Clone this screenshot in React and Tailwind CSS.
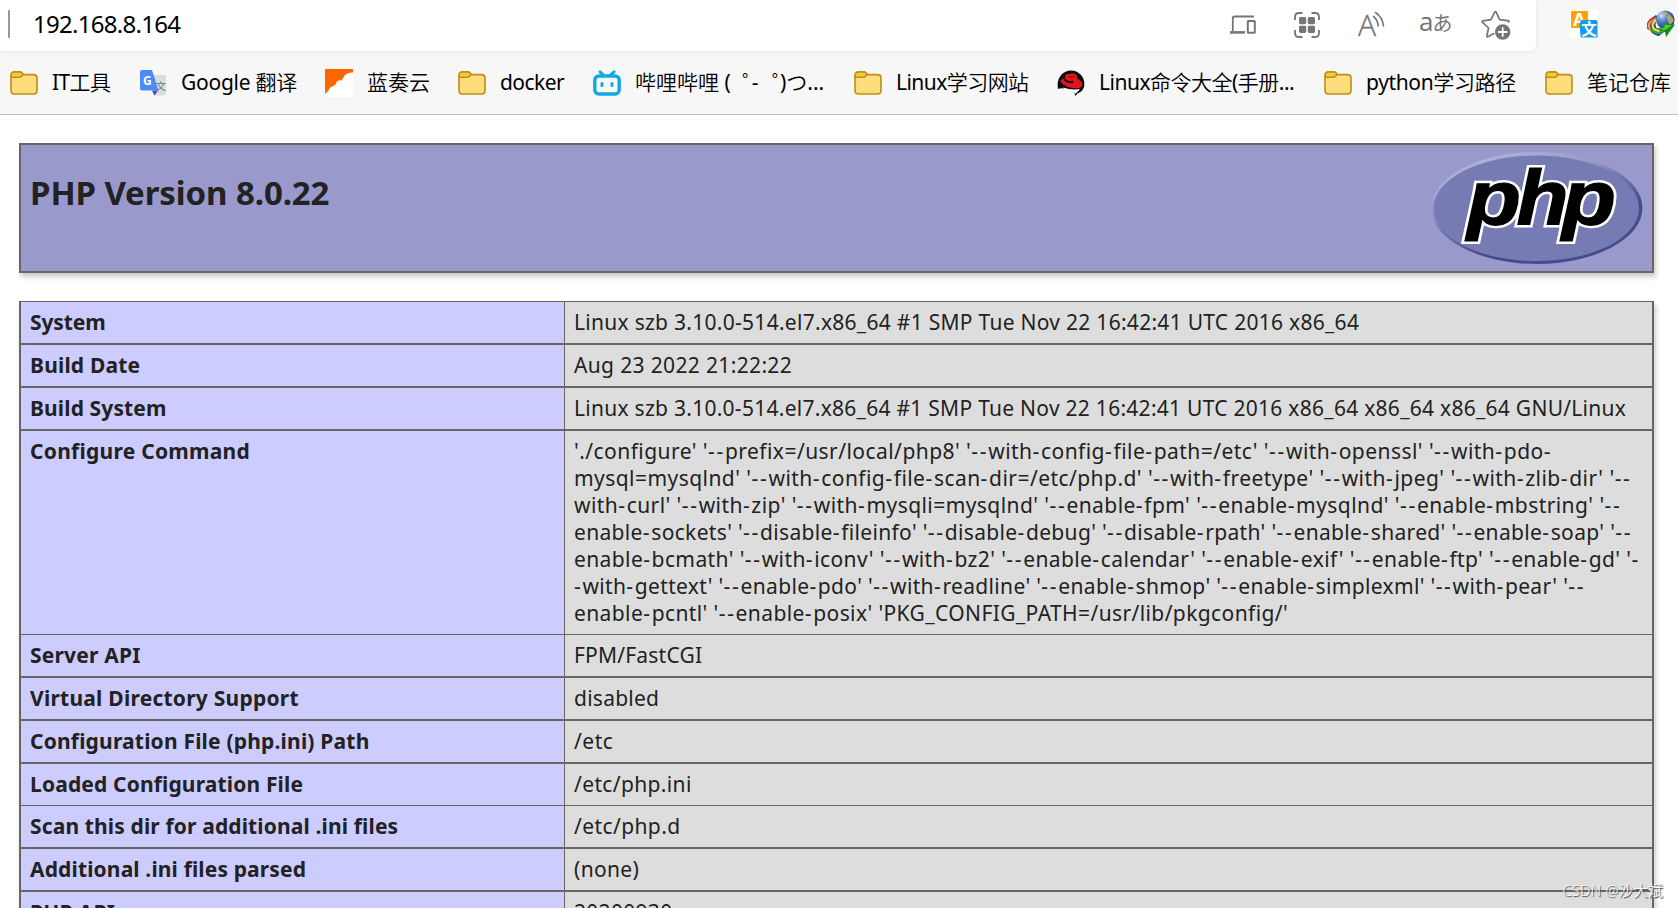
import React from 'react';

const FolderIcon = () => (
  <svg width="28" height="24" viewBox="0 0 28 24" className="shrink-0">
    <path d="M1 5 Q1 1 4.5 1 H10 Q11.2 1 12 2 L13.2 3.6 H23.5 Q27 3.6 27 7 V19.5 Q27 23 23.5 23 H4.5 Q1 23 1 19.5 Z" fill="#ffdc7d" stroke="#bd8f12" strokeWidth="1.6" />
    <path d="M1 4.8 Q1 1 4.5 1 H10 Q11.2 1 12 2 L12.8 3.2 Q12.6 4.2 11.6 5.2 Q10.8 6.2 9.4 6.2 H1 Z" fill="#f6c83f" stroke="#bd8f12" strokeWidth="1.4" />
  </svg>
);

const GoogleTranslateIcon = () => (
  <svg width="28" height="28" viewBox="0 0 28 28" className="shrink-0">
    <path d="M11 6 H25 Q27 6 27 8 V24.5 Q27 26.5 25 26.5 H15 Z" fill="#dcdcdc" />
    <path d="M13 21.5 H19 L15.5 26.5 Z" fill="#3b50b8" />
    <text x="16.5" y="20.5" fontSize="10.5" fill="#607d8b" fontFamily="Noto Sans CJK SC">文</text>
    <path d="M3 1 H13 L19.5 21.5 H3 Q1 21.5 1 19.5 V3 Q1 1 3 1 Z" fill="#4c8bf5" />
    <text x="4" y="15.5" fontSize="12" fontWeight="700" fill="#fff" fontFamily="Noto Sans">G</text>
  </svg>
);

const LanzouIcon = () => (
  <svg width="28" height="28" viewBox="0 0 28 28" className="shrink-0">
    <rect width="28" height="28" fill="#fff" />
    <path d="M0 0 H28 V3.5 C24 3.5 20.5 5 19 7.5 C17.5 9 17.5 11 16.5 11.5 C14.5 10.5 11.5 11.5 11 14.5 C10 17.5 6.5 16.5 4.5 19.5 C3 21.5 3 23 1 24 L0 25 Z" fill="#ff6600" />
  </svg>
);

const BilibiliIcon = () => (
  <svg width="28" height="26" viewBox="0 0 28 26" className="shrink-0" fill="none" stroke="#10a9e4" strokeLinecap="round">
    <rect x="1.8" y="6" width="24.4" height="18" rx="4" strokeWidth="3.4" />
    <path d="M7 1.8 L10.5 5 M21 1.8 L17.5 5" strokeWidth="3" />
    <path d="M9 13.4 V15.6 M19 13.4 V15.6" strokeWidth="3" />
  </svg>
);

const RedHatIcon = () => (
  <svg width="28" height="28" viewBox="0 0 28 28" className="shrink-0">
    <path d="M1 20 C-1 10 5 1.5 14 1.5 C23 1.5 29 10 27 18 C26 21.5 23.5 23.5 20.5 24.5 L18.5 27 L17.5 24.5 C16 22 13 22.5 11.5 21 C8 19.5 4 18.5 1 20 Z" fill="#0b0b0b" />
    <path d="M6 18.5 C12 20.5 18 21 23 20 L20 23.5 L18 25 C17.5 23 14 23.5 12 24 C9 23.5 7 21 6 18.5 Z" fill="#f7f7f7" />
    <path d="M8.5 6 C10 4 12.5 5.5 14 4.5 C17.5 3.5 20 5 20.5 9.5 C24.5 12 27 15 24.5 18 C19 21.5 5.5 17.5 3.5 12.5 C3.2 10.5 5 9.5 7.5 10.2 Z" fill="#e0141c" />
    <path d="M7.5 10.2 C9 12.8 13.5 13.8 16 12.6" fill="none" stroke="#150505" strokeWidth="2" />
    <path d="M11 7.5 L14 8.5 L18 7.5" fill="none" stroke="#8a0a10" strokeWidth="0.9" />
  </svg>
);

const bookmarks = [
  { icon: <FolderIcon />, label: 'IT工具', css: 'w-[129px] tracking-[-0.6px]' },
  { icon: <GoogleTranslateIcon />, label: 'Google 翻译', css: 'w-[186px] tracking-[-0.25px]' },
  { icon: <LanzouIcon />, label: '蓝奏云', css: 'w-[133px]' },
  { icon: <FolderIcon />, label: 'docker', css: 'w-[135px] tracking-[-0.55px]' },
  {
    icon: <BilibiliIcon />,
    label: (
      <>哔哩哔哩 ( <span className="ml-[6px] mr-[-11.5px]">゜</span>- <span className="ml-[8px] mr-[-13px]">゜</span>)つ...</>
    ),
    css: 'w-[261px]',
  },
  { icon: <FolderIcon />, label: 'Linux学习网站', css: 'w-[203px] tracking-[-0.55px]' },
  { icon: <RedHatIcon />, label: 'Linux命令大全(手册...', css: 'w-[267px] tracking-[-0.5px]' },
  { icon: <FolderIcon />, label: 'python学习路径', css: 'w-[221px] tracking-[-0.35px]' },
  { icon: <FolderIcon />, label: '笔记仓库', css: 'w-[133px]' },
];

const rows = [
  { name: 'System', nameCss: 'tracking-[-0.1px]', lines: [['Linux szb 3.10.0-514.el7.x86_64 #1 SMP Tue Nov 22 16:42:41 UTC 2016 x86_64', 'tracking-[0.28px]']] },
  { name: 'Build Date', nameCss: 'tracking-[0.18px]', lines: [['Aug 23 2022 21:22:22', 'tracking-[0.35px]']] },
  { name: 'Build System', nameCss: 'tracking-[0.12px]', lines: [['Linux szb 3.10.0-514.el7.x86_64 #1 SMP Tue Nov 22 16:42:41 UTC 2016 x86_64 x86_64 x86_64 GNU/Linux', 'tracking-[0.27px]']] },
  {
    name: 'Configure Command',
    nameCss: 'tracking-[0.26px]',
    thin: true,
    lines: [
      ["'./configure' '--prefix=/usr/local/php8' '--with-config-file-path=/etc' '--with-openssl' '--with-pdo-", 'tracking-[0.45px]'],
      ["mysql=mysqlnd' '--with-config-file-scan-dir=/etc/php.d' '--with-freetype' '--with-jpeg' '--with-zlib-dir' '--", 'tracking-[0.45px]'],
      ["with-curl' '--with-zip' '--with-mysqli=mysqlnd' '--enable-fpm' '--enable-mysqlnd' '--enable-mbstring' '--", 'tracking-[0.43px]'],
      ["enable-sockets' '--disable-fileinfo' '--disable-debug' '--disable-rpath' '--enable-shared' '--enable-soap' '--", 'tracking-[0.336px]'],
      ["enable-bcmath' '--with-iconv' '--with-bz2' '--enable-calendar' '--enable-exif' '--enable-ftp' '--enable-gd' '-", 'tracking-[0.39px]'],
      ["-with-gettext' '--enable-pdo' '--with-readline' '--enable-shmop' '--enable-simplexml' '--with-pear' '--", 'tracking-[0.343px]'],
      ["enable-pcntl' '--enable-posix' 'PKG_CONFIG_PATH=/usr/lib/pkgconfig/'", 'tracking-[0.395px]'],
    ],
  },
  { name: 'Server API', nameCss: 'tracking-[0.2px]', lines: [['FPM/FastCGI', 'tracking-[0.2px]']] },
  { name: 'Virtual Directory Support', nameCss: 'tracking-[0.24px]', lines: [['disabled', 'tracking-[0.25px]']] },
  { name: 'Configuration File (php.ini) Path', nameCss: 'tracking-[0.19px]', lines: [['/etc', 'tracking-[0.5px]']] },
  { name: 'Loaded Configuration File', nameCss: 'tracking-[0.15px]', thin: true, lines: [['/etc/php.ini', 'tracking-[0.36px]']] },
  { name: 'Scan this dir for additional .ini files', nameCss: 'tracking-[0.14px]', lines: [['/etc/php.d', 'tracking-[0.4px]']] },
  { name: 'Additional .ini files parsed', nameCss: 'tracking-[0.14px]', lines: [['(none)', 'tracking-[0.35px]']] },
  { name: 'PHP API', nameCss: 'tracking-[0.25px]', lines: [['20200930', 'tracking-[0.3px]']] },
];

// the dashes of the configure flags are set wider than the letters
function Flags({ text }) {
  return text.split(/(-+)/).map((part, i) => (
    part.startsWith('-') ? <span key={i} className="tracking-[1.7px]">{part}</span> : part
  ));
}

function AddressIcons() {
  return (
    <div className="flex items-center h-[49px] pr-[25px] text-[#757575]">
      {/* devices */}
      <svg width="28" height="20" viewBox="0 0 28 20" className="mr-[37px]" fill="none" stroke="currentColor" strokeWidth="1.8">
        <path d="M25 1.5 H5.5 Q3.8 1.5 3.8 3.2 V16" />
        <path d="M1 17.4 H16" strokeWidth="2.6" />
        <rect x="18.8" y="6" width="7" height="11.8" rx="0.6" strokeWidth="2" />
      </svg>
      {/* apps */}
      <svg width="26" height="26" viewBox="0 0 26 26" className="mr-[38px]" fill="none" stroke="currentColor" strokeWidth="1.8">
        <path d="M1 8 V5 Q1 1 5 1 H8.5 M17.5 1 H21 Q25 1 25 5 V8 M25 18 V21 Q25 25 21 25 H17.5 M8.5 25 H5 Q1 25 1 21 V18" />
        <g fill="currentColor" stroke="none">
          <rect x="5" y="5" width="7.2" height="7.2" rx="1.4" />
          <rect x="13.8" y="5" width="7.2" height="7.2" rx="1.4" />
          <rect x="5" y="13.8" width="7.2" height="7.2" rx="1.4" />
          <rect x="13.8" y="13.8" width="7.2" height="7.2" rx="1.4" />
        </g>
      </svg>
      {/* read aloud */}
      <svg width="28" height="28" viewBox="0 0 28 28" className="mr-[33px]" fill="none" stroke="currentColor" strokeWidth="1.6" strokeLinecap="round">
        <text x="0" y="24.5" fontSize="29" textLength="18" lengthAdjust="spacingAndGlyphs" fill="currentColor" stroke="currentColor" strokeWidth="0.4" fontFamily="Open Sans" fontWeight="300">A</text>
        <path d="M15.5 5.5 Q19.5 8.5 20.3 15" />
        <path d="M17.5 1.5 Q24.5 6 25.5 15" />
      </svg>
      <span className="w-8 mr-[30px] pb-[7px] whitespace-nowrap text-[26px] leading-none tracking-[-1px] font-['Open_Sans',_'Noto_Sans_CJK_JP',sans-serif]">
        a<span className="text-[20px]">あ</span>
      </span>
      {/* favourite */}
      <svg width="30" height="30" viewBox="0 0 30 30" fill="none" stroke="currentColor" strokeWidth="1.7" strokeLinejoin="round" strokeLinecap="round">
        <path d="M27.5 12 Q28.6 11 27 10.6 L18.6 9.6 L15.2 2.2 Q14.4 1 13.6 2.2 L10 9.6 L1.8 10.8 Q0.6 11.2 1.5 12.3 L7.6 18 L5.8 25.8 Q5.8 27.2 7 26.7 L12.8 23.6" />
        <circle cx="21.7" cy="22" r="7.7" fill="currentColor" stroke="none" />
        <path d="M21.7 18 V26 M17.7 22 H25.7" stroke="#fff" strokeWidth="1.8" />
      </svg>
    </div>
  );
}

function ExtensionIcons() {
  return (
    <div className="flex items-center pb-1 pl-[34px]">
      <svg width="28" height="28" viewBox="0 0 28 28" className="shrink-0">
        <rect width="28" height="28" fill="#fff" />
        <rect x="1" y="1" width="17" height="17" rx="1" fill="#ffa200" />
        <text x="3" y="15.5" fontSize="18" fontWeight="700" fill="#fff" fontFamily="Noto Sans">A</text>
        <path d="M11 10 H26 Q27.5 10 27.5 11.5 V27.5 H12 Q10.5 27.5 10.5 26 L9.5 14 Z" fill="#159ce8" />
        <text x="11.2" y="25" fontSize="15.5" fontWeight="700" fill="#fff" fontFamily="Noto Sans CJK SC">文</text>
      </svg>
      <svg width="28" height="28" viewBox="0 0 28 28" className="shrink-0 ml-[49px]">
        <defs>
          <radialGradient id="globe" cx="0.3" cy="0.28" r="0.8">
            <stop offset="0" stopColor="#d5e4fb" />
            <stop offset="0.35" stopColor="#5d8ad0" />
            <stop offset="1" stopColor="#12307f" />
          </radialGradient>
        </defs>
        <path d="M9 5 C-1 10 -1 24 12 26 L17 22 C8 21 6 13 12 8 Z" fill="#1d46b4" />
        <path d="M9.5 7 C-0.5 9 -1 17 2 19.5" fill="none" stroke="#d8342a" strokeWidth="1.6" />
        <path d="M9.5 8.5 C1 11 0.5 18 5 21" fill="none" stroke="#f3a01c" strokeWidth="1.8" />
        <path d="M10 10 C3.5 13 4 20 13 21.5" fill="none" stroke="#f0e828" strokeWidth="2.2" />
        <path d="M4 19 C6 22.5 10 23.5 15 22.5" fill="none" stroke="#3aa52e" strokeWidth="2.4" />
        <circle cx="18.3" cy="9.8" r="9.3" fill="url(#globe)" />
        <path d="M14 2 Q18 1 21 3.5 Q20 6 16 5 Z M21 4 Q26 7 27 11 L23 15 Q19 10 21 4 Z" fill="#c2b45c" opacity="0.85" />
        <path d="M10 18 Q16 18.5 17.5 16 L13 13.5 L28 14.5 L19 27 L18 22 Q13 22 10 18 Z" fill="#1a8a1c" />
        <path d="M15 14.5 L25 15.2 L18.5 19.5 Q14 20 12 18.6 Q17 18.6 18.6 16 Z" fill="#4fd23c" />
      </svg>
    </div>
  );
}

function PhpLogo() {
  return (
    <svg width="212" height="113" viewBox="0 0 212 113" className="shrink-0">
      <defs>
        <linearGradient id="rim" x1="0.2" y1="0" x2="0.8" y2="1">
          <stop offset="0" stopColor="#b4b6de" />
          <stop offset="0.3" stopColor="#9a9acb" />
          <stop offset="0.5" stopColor="#6a6cab" />
          <stop offset="0.68" stopColor="#484a8e" />
          <stop offset="1" stopColor="#484a8e" />
        </linearGradient>
      </defs>
      <ellipse cx="105.8" cy="56" rx="105.6" ry="56" fill="url(#rim)" />
      <ellipse cx="105.3" cy="56.3" rx="102.8" ry="52.8" fill="#777bb3" />
      <g fontFamily="Liberation Sans" fontWeight="700" fontStyle="italic" fontSize="78" strokeLinejoin="miter">
        <g fill="#fff" stroke="#fff" strokeWidth="6">
          <text x="36" y="73" textLength="54" lengthAdjust="spacingAndGlyphs">p</text>
          <text x="85.5" y="73" textLength="52" lengthAdjust="spacingAndGlyphs">h</text>
          <text x="131" y="73" textLength="54" lengthAdjust="spacingAndGlyphs">p</text>
        </g>
        <g fill="#000" stroke="#000" strokeWidth="1.2">
          <text x="36" y="73" textLength="54" lengthAdjust="spacingAndGlyphs">p</text>
          <text x="85.5" y="73" textLength="52" lengthAdjust="spacingAndGlyphs">h</text>
          <text x="131" y="73" textLength="54" lengthAdjust="spacingAndGlyphs">p</text>
        </g>
      </g>
    </svg>
  );
}

function App() {
  return (
    <div className="relative w-full h-[908px] overflow-hidden bg-white text-[21px] leading-[27px] text-[#222222] font-['Noto_Sans',_'Noto_Sans_CJK_SC_DemiLight',_'Noto_Sans_CJK_SC',sans-serif]">
      {/* BROWSER BARS */}
      <div className="bg-[#f7f7f7] h-[115px] border-b border-[#bdbdbd] text-black">
        <div className="flex h-[51px]">
          <div className="flex justify-between w-[1536px] bg-white rounded-br-[7px] shadow-[0_1px_5px_rgba(0,0,0,0.08)]">
            <div className="flex">
              <div className="w-0.5 h-7 mt-2.5 ml-2 bg-[#999999]" />
              <div className="pl-[23px] text-[24px] leading-[47px] tracking-[-0.72px]">192.168.8.164</div>
            </div>
            <AddressIcons />
          </div>
          <ExtensionIcons />
        </div>
        <div className="flex h-[63px] pl-2.5">
          {bookmarks.map((b, i) => (
            <div key={i} className={`flex items-center gap-3.5 shrink-0 whitespace-nowrap ${b.css}`}>
              {b.icon}
              <span>{b.label}</span>
            </div>
          ))}
        </div>
      </div>

      {/* PHPINFO */}
      <main className="w-[1635px] ml-[19px] pt-7">
        <div className="flex justify-between h-[130px] pl-[9px] pr-[9px] bg-[#9999cc] border-2 border-[#666666] shadow-[2px_4px_5px_#cccccc]">
          <h1 className="pt-7 text-[33px] leading-10 font-bold tracking-[-0.1px] whitespace-nowrap">PHP Version 8.0.22</h1>
          <div className="pt-[7px]">
            <PhpLogo />
          </div>
        </div>

        <div className="mt-7 border-x-2 border-t border-[#666666] shadow-[2px_4px_5px_#cccccc]">
          {rows.map((row) => (
            <div key={row.name} className={`flex border-[#666666] ${row.thin ? 'border-b' : 'border-b-2'}`}>
              <div className="w-[544px] shrink-0 py-[7px] pl-[9px] bg-[#ccccff] border-r border-[#666666] font-bold">
                <span className={row.nameCss}>{row.name}</span>
              </div>
              <div className="grow py-[7px] pl-[9px] bg-[#dddddd] whitespace-nowrap">
                {row.lines.map(([text, css]) => (
                  <p key={text} className={css}>
                    {row.lines.length > 1 ? <Flags text={text} /> : text}
                  </p>
                ))}
              </div>
            </div>
          ))}
        </div>
      </main>

      <div className="absolute right-[15px] bottom-2 text-[14.6px] leading-5 font-light tracking-[0.2px] text-white/90 whitespace-nowrap [text-shadow:1px_1px_1px_#444444]">
        CSDN @沙大斌
      </div>
    </div>
  );
}

export default App;
